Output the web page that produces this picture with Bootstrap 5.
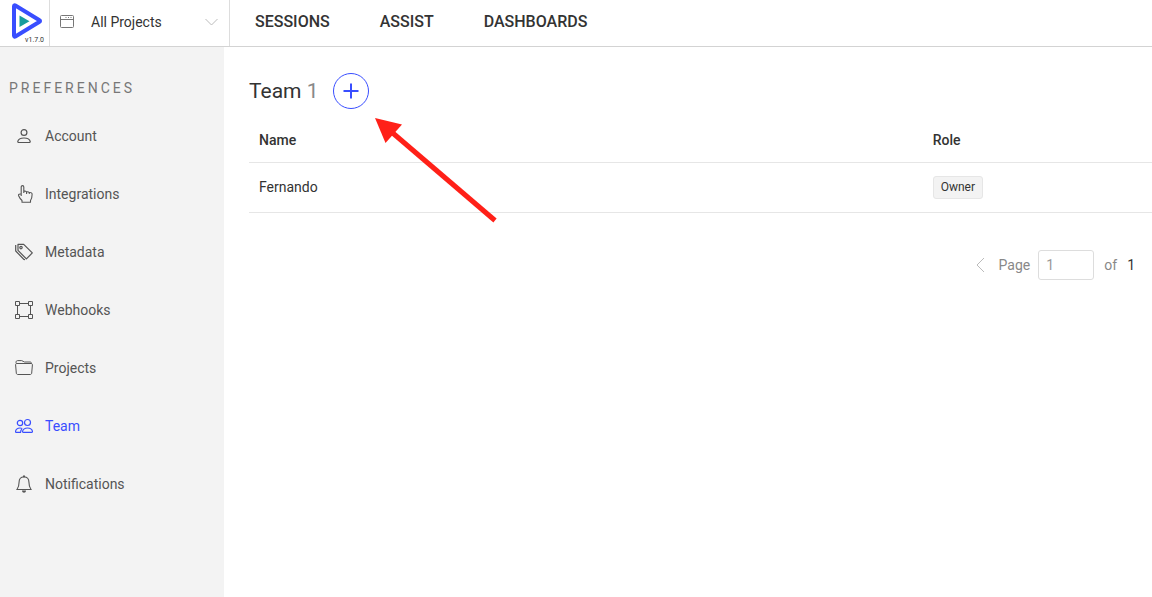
<!DOCTYPE html>
<html lang="en">
<head>
<meta charset="utf-8">
<meta name="viewport" content="width=device-width, initial-scale=1">
<title>Team preferences</title>
<link href="https://cdn.jsdelivr.net/npm/bootstrap@5.3.0/dist/css/bootstrap.min.css" rel="stylesheet">
<style>
  :root { --ink: #333; --soft: #555; --muted-ink: #888; --main: #394eff; --line: #ddd; --rule: #e6e6e6; --panel: #f3f3f3; }
  body { font-family: Roboto, "Liberation Sans", sans-serif; font-size: 14px; line-height: 20px; color: var(--ink); }
  svg { display: block; flex: none; fill: none; stroke: currentColor; }
  .topbar { height: 47px; border-bottom: 1px solid #d3d3d3; }
  .logo { width: 50px; padding: 3px 0 0 10px; border-right: 1px solid var(--line); color: var(--ink); }
  .version { font-size: 7px; line-height: 8px; right: 5px; bottom: 2px; }
  .project { width: 180px; padding: 0 11px 3px 10px; border-right: 1px solid var(--line); gap: 17px; color: #777; }
  .project select { appearance: none; border: 0; background: none; color: var(--ink); padding: 0; min-width: 0; }
  .project .caret { color: #bbb; }
  .topbar nav { gap: 50px; padding: 0 25px 3px; }
  .topbar nav a { font-size: 16px; line-height: 21px; font-weight: 500; color: var(--ink); }
  .sidebar { width: 224px; background: var(--panel); padding: 31px 9px; }
  .sidebar h2 { font-size: 14px; line-height: 20px; letter-spacing: 3px; font-weight: 400; color: #777; margin: 0 0 9px; }
  .sidebar a { height: 58px; padding-left: 6px; gap: 12px; color: var(--soft); }
  .sidebar a.active { color: var(--main); }
  .content { padding: 26px 0 0 25px; }
  .content h1 { font-size: 21px; line-height: 36px; font-weight: 400; margin: 0; }
  .count { color: var(--muted-ink); }
  .add { width: 36px; height: 36px; border: 1px solid var(--main); color: var(--main); background: #fff; padding: 0; margin-left: 14px; }
  .pointer { left: 124px; top: 43px; pointer-events: none; }
  .members { margin: 9px 0 0; table-layout: fixed; --bs-table-bg: transparent; border-color: var(--rule); color: var(--ink); }
  .members th, .members td { padding: 0 10px; color: var(--ink); vertical-align: middle; border-bottom: 1px solid var(--rule); }
  .members th { height: 44px; font-weight: 500; }
  .members td { height: 50px; }
  .members .who { width: 74.6%; }
  .role { font-size: 12px; line-height: 21px; padding: 0 7px; border: 1px solid #e6e6e6; border-radius: 3px; background: var(--panel); }
  .pager { padding: 37px 17px 0 0; color: var(--muted-ink); }
  .pager button { border: 0; background: none; padding: 0; color: #bbb; margin-right: 14px; }
  .pager input { width: 56px; height: 30px; border: 1px solid #ddd; border-radius: 3px; padding: 0 7px; color: #999; margin: 0 10px 0 8px; }
  .pager strong { font-weight: 400; color: var(--ink); margin-left: 10px; }
</style>
</head>
<body class="d-flex flex-column min-vh-100 bg-white">
<header class="topbar d-flex bg-white">
  <a class="logo position-relative text-decoration-none" href="#" aria-label="Home">
    <svg width="34" height="36" viewBox="0 0 34 36"><path d="M4 3.200v29.600c0 .8.8 1 1.400.7L29.500 18.700c.7-.4.7-1 0-1.400L5.400 2.500C4.800 2.200 4 2.400 4 3.200z" stroke="#394eff" stroke-width="4"/><path d="M9.500 12.500v11.500l10-5.800z" fill="#169c9e" stroke="none"/></svg>
    <span class="version position-absolute">v1.7.0</span>
  </a>
  <div class="project d-flex align-items-center">
    <svg width="14" height="13" viewBox="0 0 14 13"><rect x=".5" y=".5" width="13" height="12" rx="1"/><path d="M.5 4.500h13"/><path d="M5.500 2.500h1M8 2.500h1M10.500 2.500h1"/></svg>
    <select class="flex-fill" aria-label="Project"><option>All Projects</option></select>
    <svg class="caret" width="13" height="8" viewBox="0 0 13 8"><path d="m.5 1 6 6 6-6"/></svg>
  </div>
  <nav class="d-flex align-items-center">
    <a class="text-decoration-none" href="#">SESSIONS</a>
    <a class="text-decoration-none" href="#">ASSIST</a>
    <a class="text-decoration-none" href="#">DASHBOARDS</a>
  </nav>
</header>
<div class="d-flex flex-fill">
  <aside class="sidebar flex-shrink-0">
    <h2>PREFERENCES</h2>
    <nav class="d-flex flex-column">
      <a class="d-flex align-items-center text-decoration-none" href="#"><svg width="18" height="18" viewBox="0 0 18 18" stroke-width="1.200"><circle cx="9" cy="5.500" r="2.900"/><path d="M3.800 15.500c-.8 0-1.100-.5-1-1.100.4-2 2.700-3.400 6.200-3.400s5.800 1.400 6.200 3.400c.1.600-.2 1.100-1 1.100z"/></svg>Account</a>
      <a class="d-flex align-items-center text-decoration-none" href="#"><svg width="18" height="18" viewBox="0 0 18 18" stroke-width="1.100"><path d="M6.200 11V2c0-1.900 2.600-1.900 2.600 0v6M8.800 6.200c1.500-.3 2.800 0 2.800 1.200V9M11.600 6.800c1.500-.2 2.700.1 2.700 1.300v1M14.300 7.600c1.900-.2 2.900.3 2.800 1.800 0 2.900-.5 4.500-1.600 6.100v1.700H7V15.500c-1.500-1.400-2.800-3.300-3.500-5-.3-1.100.9-1.700 2.700-1.500" stroke-linejoin="round"/></svg>Integrations</a>
      <a class="d-flex align-items-center text-decoration-none" href="#"><svg width="18" height="18" viewBox="0 0 18 18" stroke-width="1.200"><path d="M3 1.300h5.700l8.600 8.600-5.900 6L3 7.400z" stroke-linejoin="round"/><path d="M.7 2v6l8.200 8.400 1.100.3"/><circle cx="6" cy="4.600" r="1.200"/></svg>Metadata</a>
      <a class="d-flex align-items-center text-decoration-none" href="#"><svg width="18" height="18" viewBox="0 0 18 18"><path d="M.5.5h4v4h-4zM13.500.5h4v4h-4zM.5 13.500h4v4h-4zM13.500 13.500h4v4h-4zM4.500 2.500h9M4.500 15.500h9M2.500 4.500v9M15.500 4.500v9"/></svg>Webhooks</a>
      <a class="d-flex align-items-center text-decoration-none" href="#"><svg width="18" height="18" viewBox="0 0 18 18"><path d="M1.300 4.500 1 3.400C1 2.300 1.600 1.600 2.600 1.600h4.100c1.300 0 1.500 1.400 2.800 1.400H15c1 0 1.500.6 1.500 1.500M2 4.500h14c1 0 1.500.6 1.400 1.500l-.7 8c-.1 1-.7 1.500-1.500 1.500H2.800c-.8 0-1.400-.5-1.500-1.500L.6 6C.5 5.100 1 4.500 2 4.500z"/></svg>Projects</a>
      <a class="active d-flex align-items-center text-decoration-none" href="#" aria-current="page"><svg width="18" height="18" viewBox="0 0 18 18" stroke-width="1.200"><circle cx="5" cy="6" r="2.700"/><circle cx="12.500" cy="5.500" r="3"/><path d="M8.500 15.400c-1 0-1.100-.6-.9-1.300.5-1.800 2.100-3.100 4.900-3.100s4.500 1.300 4.900 3.100c.2.700 0 1.300-.8 1.300zM6 15.400H1.200c-.7 0-.8-.5-.6-1.200C1 12.300 2.500 11 5 11c1 0 1.600.2 2.300.5M6.800 12.200c-.8.800-1.200 2-1.200 3.200"/></svg>Team</a>
      <a class="d-flex align-items-center text-decoration-none" href="#"><svg width="18" height="18" viewBox="0 0 18 18" stroke-width="1.100"><path d="M9 1.700c-3 .2-4.900 2.300-4.900 5.300 0 3-.7 5.500-2.100 7.500h14c-1.400-2-2.100-4.500-2.100-7.500 0-3-1.900-5.100-4.900-5.300z"/><path d="M8 .5h2v1.700H8zM7 15.500h4c0 3-4 3-4 0z" fill="currentColor" stroke="none"/></svg>Notifications</a>
    </nav>
  </aside>
  <main class="content flex-fill">
    <div class="position-relative d-flex align-items-center">
      <h1>Team <span class="count">1</span></h1>
      <button class="add rounded-circle d-flex align-items-center justify-content-center" type="button" aria-label="Add member"><svg width="16" height="16" viewBox="0 0 16 16" stroke-width="2"><path d="M8 .5v15M.5 8h15"/></svg></button>
      <svg class="pointer position-absolute" width="126" height="108" viewBox="0 0 126 108"><path d="M18 15.500 122 104.500" stroke="#ff2018" stroke-width="5"/><path d="M2 2 29 8.500 12.500 27z" fill="#ff2018" stroke="none"/></svg>
    </div>
    <table class="members table">
      <thead><tr><th class="who" scope="col">Name</th><th scope="col">Role</th></tr></thead>
      <tbody><tr><td>Fernando</td><td><span class="role d-inline-block">Owner</span></td></tr></tbody>
    </table>
    <div class="pager d-flex align-items-center justify-content-end">
      <button type="button" aria-label="Previous page"><svg width="9" height="16" viewBox="0 0 9 16"><path d="M8 1 1 8l7 7"/></svg></button>
      <label for="page">Page</label>
      <input id="page" type="text" value="1">
      <span>of</span><strong>1</strong>
    </div>
  </main>
</div>
<script src="https://cdn.jsdelivr.net/npm/bootstrap@5.3.0/dist/js/bootstrap.bundle.min.js"></script>
</body>
</html>
